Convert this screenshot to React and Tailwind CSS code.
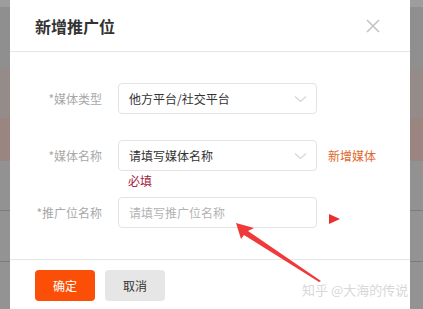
const Chevron = () => (
  <svg width="13" height="8" viewBox="0 0 13 8" className="shrink-0">
    <path d="M1 1.5 L6.5 6.5 L12 1.5" fill="none" stroke="#d6d6d6" strokeWidth="1.2" />
  </svg>
);

const Row = ({ label, children, after, below }) => (
  <div className="flex flex-col">
    <div className="flex items-center">
      <div className="w-[92px] text-right text-[12px] text-[#a8a8a8]">{label}</div>
      <div className="ml-[16px] w-[199px] h-[31px] rounded-[4px] border border-[#e3e3e3] flex items-center justify-between pl-[10px] pr-[9px]">
        {children}
      </div>
      {after}
    </div>
    {below}
  </div>
);

export default function App() {
  return (
    <div
      className="relative w-[423px] h-[309px] overflow-hidden"
      style={{ fontFamily: '"Noto Sans CJK SC", "Noto Sans", sans-serif' }}
    >
      {/* dimmed page behind the dialog */}
      <div className="absolute inset-0 flex flex-col">
        <div className="h-[7px] bg-[#9d9d9d]" />
        <div className="h-[61px] bg-[#8f8f8f]" />
        <div className="h-[50px] bg-[#958c89]" />
        <div className="h-[43px] bg-[#9b8580]" />
        <div className="h-[50px] bg-[#929292] border-b border-[#7c7c7c]" />
        <div className="h-[51px] bg-[#939393] border-b border-[#7c7c7c]" />
        <div className="flex-1 bg-[#939393]" />
      </div>

      {/* dialog */}
      <div className="absolute left-[10px] top-0 w-[400px] h-[309px] bg-white flex flex-col">
        <div className="h-[52px] flex items-center justify-between pl-[25px] pr-[30px] border-b border-[#e6e6e6]">
          <span className="text-[16px] font-bold text-[#333]">新增推广位</span>
          <svg width="14" height="14" viewBox="0 0 14 14">
            <path d="M1 1 L13 13 M13 1 L1 13" stroke="#c4c4c4" strokeWidth="1.6" />
          </svg>
        </div>

        <div className="h-[208px] flex flex-col pt-[31px] border-b border-[#e6e6e6]">
          <Row label="*媒体类型">
            <span className="text-[12px] text-[#333]">他方平台/社交平台</span>
            <Chevron />
          </Row>
          <div className="mt-[26px]">
            <Row
              label="*媒体名称"
              after={<span className="ml-[11px] text-[12px] text-[#e0672c]">新增媒体</span>}
              below={<span className="ml-[118px] mt-[1px] text-[12px] leading-[18px] text-[#a3203c]">必填</span>}
            >
              <span className="text-[12px] text-[#333]">请填写媒体名称</span>
              <Chevron />
            </Row>
          </div>
          <div className="mt-[7px]">
            <Row
              label="*推广位名称"
              after={
                <svg width="11" height="10" viewBox="0 0 11 10" className="ml-[12px] mt-[12px]">
                  <path d="M0 0 L11 5 L0 10 Z" fill="#e8312f" />
                </svg>
              }
            >
              <span className="text-[12px] text-[#b3b3b3]">请填写推广位名称</span>
            </Row>
          </div>
        </div>

        <div className="flex gap-[10px] pl-[25px] pt-[10px]">
          <button className="w-[60px] h-[31px] rounded-[4px] bg-[#fb4f07] text-white text-[12px]">确定</button>
          <button className="w-[60px] h-[31px] rounded-[4px] bg-[#e6e6e6] text-[#333] text-[12px]">取消</button>
        </div>
      </div>

      {/* annotation arrow */}
      <svg className="absolute left-0 top-0 pointer-events-none" width="423" height="309" viewBox="0 0 423 309">
        <path d="M236 223 L254 228 L248 231 L321 281 L319 282 L244 235 L241 239 Z" fill="#ef3a3a" />
      </svg>

      {/* watermark */}
      <span className="absolute left-[302px] top-[280px] text-[13px] text-[#d8d8d8] whitespace-nowrap [text-shadow:0_0_1px_#fff]">
        知乎 @大海的传说
      </span>
    </div>
  );
}
